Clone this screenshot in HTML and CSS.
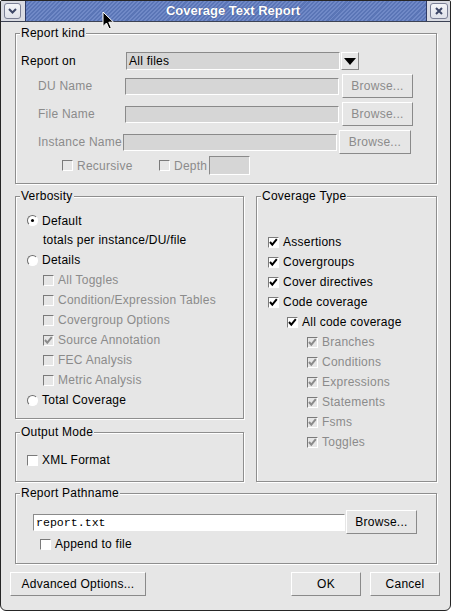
FILE: index.html
```html
<!DOCTYPE html>
<html>
<head>
<meta charset="utf-8">
<link rel="stylesheet" href="styles.css">
</head>
<body>
<div class="window">
  <div class="titlebar">
    <div class="tb-btn tb-left"><svg width="9" height="6" viewBox="0 0 9 6"><polyline points="1,1 4.5,4.5 8,1" fill="none" stroke="#3d4767" stroke-width="2"/></svg></div>
    <div class="tb-title">Coverage Text Report</div>
    <div class="tb-btn tb-right"><svg width="8" height="8" viewBox="0 0 8 8"><path d="M1 1 L7 7 M7 1 L1 7" stroke="#3d4767" stroke-width="2"/></svg></div>
  </div>

  <div class="body">
    <div class="group kind">
      <div class="group-title">Report kind</div>
      <div class="gbody kind-body">
        <div class="row r-combo">
          <span class="lbl-main">Report on</span>
          <div class="combo">All files</div>
          <div class="combo-btn"><svg width="12" height="7" viewBox="0 0 12 7"><polygon points="0,0 12,0 6,7" fill="#000"/></svg></div>
        </div>
        <div class="row r-field">
          <span class="lbl-sub dis">DU Name</span>
          <div class="field"></div>
          <button class="btn browse dis">Browse...</button>
        </div>
        <div class="row r-field">
          <span class="lbl-sub dis">File Name</span>
          <div class="field"></div>
          <button class="btn browse dis">Browse...</button>
        </div>
        <div class="row r-field">
          <span class="lbl-sub lbl-inst dis">Instance Name</span>
          <div class="field"></div>
          <button class="btn browse browse-inst dis">Browse...</button>
        </div>
        <div class="row r-rec">
          <span class="opt opt-rec"><span class="cb cb-dis"></span><span class="dis">Recursive</span></span>
          <span class="opt opt-depth"><span class="cb cb-dis"></span><span class="dis">Depth</span></span>
          <div class="depth-field"></div>
        </div>
      </div>
    </div>

    <div class="middle">
      <div class="left-col">
        <div class="group verb">
          <div class="group-title">Verbosity</div>
          <div class="gbody verb-body">
            <div class="line first"><span class="rb rb-on"></span><span>Default</span></div>
            <div class="line ind">totals per instance/DU/file</div>
            <div class="line"><span class="rb"></span><span>Details</span></div>
            <div class="line ind"><span class="cb cb-dis"></span><span class="dis">All Toggles</span></div>
            <div class="line ind"><span class="cb cb-dis"></span><span class="dis">Condition/Expression Tables</span></div>
            <div class="line ind"><span class="cb cb-dis"></span><span class="dis">Covergroup Options</span></div>
            <div class="line ind"><span class="cb cb-dis"><svg width="9" height="9" viewBox="0 0 9 9"><polyline points="1,4 3.3,6.6 7.8,1.2" fill="none" stroke="#8b8b8b" stroke-width="2"/></svg></span><span class="dis">Source Annotation</span></div>
            <div class="line ind"><span class="cb cb-dis"></span><span class="dis">FEC Analysis</span></div>
            <div class="line ind"><span class="cb cb-dis"></span><span class="dis">Metric Analysis</span></div>
            <div class="line"><span class="rb"></span><span>Total Coverage</span></div>
          </div>
        </div>
        <div class="group outmode">
          <div class="group-title">Output Mode</div>
          <div class="gbody out-body">
            <div class="line"><span class="cb"></span><span>XML Format</span></div>
          </div>
        </div>
      </div>

      <div class="group cov">
        <div class="group-title">Coverage Type</div>
        <div class="gbody cov-body">
          <div class="line"><span class="cb"><svg width="9" height="9" viewBox="0 0 9 9"><polyline points="1,4 3.3,6.6 7.8,1.2" fill="none" stroke="#000" stroke-width="2"/></svg></span><span>Assertions</span></div>
          <div class="line"><span class="cb"><svg width="9" height="9" viewBox="0 0 9 9"><polyline points="1,4 3.3,6.6 7.8,1.2" fill="none" stroke="#000" stroke-width="2"/></svg></span><span>Covergroups</span></div>
          <div class="line"><span class="cb"><svg width="9" height="9" viewBox="0 0 9 9"><polyline points="1,4 3.3,6.6 7.8,1.2" fill="none" stroke="#000" stroke-width="2"/></svg></span><span>Cover directives</span></div>
          <div class="line"><span class="cb"><svg width="9" height="9" viewBox="0 0 9 9"><polyline points="1,4 3.3,6.6 7.8,1.2" fill="none" stroke="#000" stroke-width="2"/></svg></span><span>Code coverage</span></div>
          <div class="line ind1"><span class="cb"><svg width="9" height="9" viewBox="0 0 9 9"><polyline points="1,4 3.3,6.6 7.8,1.2" fill="none" stroke="#000" stroke-width="2"/></svg></span><span>All code coverage</span></div>
          <div class="line ind2"><span class="cb cb-dis"><svg width="9" height="9" viewBox="0 0 9 9"><polyline points="1,4 3.3,6.6 7.8,1.2" fill="none" stroke="#8b8b8b" stroke-width="2"/></svg></span><span class="dis">Branches</span></div>
          <div class="line ind2"><span class="cb cb-dis"><svg width="9" height="9" viewBox="0 0 9 9"><polyline points="1,4 3.3,6.6 7.8,1.2" fill="none" stroke="#8b8b8b" stroke-width="2"/></svg></span><span class="dis">Conditions</span></div>
          <div class="line ind2"><span class="cb cb-dis"><svg width="9" height="9" viewBox="0 0 9 9"><polyline points="1,4 3.3,6.6 7.8,1.2" fill="none" stroke="#8b8b8b" stroke-width="2"/></svg></span><span class="dis">Expressions</span></div>
          <div class="line ind2"><span class="cb cb-dis"><svg width="9" height="9" viewBox="0 0 9 9"><polyline points="1,4 3.3,6.6 7.8,1.2" fill="none" stroke="#8b8b8b" stroke-width="2"/></svg></span><span class="dis">Statements</span></div>
          <div class="line ind2"><span class="cb cb-dis"><svg width="9" height="9" viewBox="0 0 9 9"><polyline points="1,4 3.3,6.6 7.8,1.2" fill="none" stroke="#8b8b8b" stroke-width="2"/></svg></span><span class="dis">Fsms</span></div>
          <div class="line ind2"><span class="cb cb-dis"><svg width="9" height="9" viewBox="0 0 9 9"><polyline points="1,4 3.3,6.6 7.8,1.2" fill="none" stroke="#8b8b8b" stroke-width="2"/></svg></span><span class="dis">Toggles</span></div>
        </div>
      </div>
    </div>

    <div class="group path">
      <div class="group-title">Report Pathname</div>
      <div class="gbody path-body">
        <div class="row r-entry">
          <div class="entry">report.txt</div>
          <button class="btn browse browse-path">Browse...</button>
        </div>
        <div class="line append"><span class="cb"></span><span>Append to file</span></div>
      </div>
    </div>
  </div>

  <div class="actions">
    <button class="btn btn-adv">Advanced Options...</button>
    <div class="spacer"></div>
    <button class="btn btn-ok">OK</button>
    <button class="btn btn-cancel">Cancel</button>
  </div>

  <svg class="cursor" width="13" height="20" viewBox="0 0 13 20"><path d="M1 1 V15.5 L4.5 12 L7 17.8 L9.3 16.8 L6.8 11.2 H11.5 Z" fill="#000" stroke="#fff" stroke-width="1" stroke-linejoin="miter"/></svg>
</div>
</body>
</html>
```

FILE: styles.css
```css
* { box-sizing: border-box; }
html, body { margin: 0; padding: 0; background: #ffffff; }
body {
  width: 451px;
  height: 611px;
  font-family: "Liberation Sans", Arial, sans-serif;
  font-size: 12px;
  line-height: 14px;
  letter-spacing: 0.25px;
  color: #000;
}

.window {
  position: relative;
  width: 451px;
  height: 611px;
  border: 1px solid #262626;
  border-radius: 2px 2px 6px 6px;
  background: #e6e6e6;
  overflow: hidden;
}

/* title bar */
.titlebar {
  height: 21px;
  display: flex;
  align-items: stretch;
  background: #d9dbe2;
  border-bottom: 1px solid #3c4254;
}
.tb-btn {
  flex: none;
  align-self: center;
  height: 16px;
  border: 1px solid #7b8096;
  border-radius: 3px;
  background: linear-gradient(#f4f5f8, #dfe2ea);
  display: flex;
  align-items: center;
  justify-content: center;
}
.tb-left { width: 17px; margin: 0 4px 0 3px; }
.tb-right { width: 18px; margin: 0 2px 0 3px; }
.tb-title {
  flex: 1;
  display: flex;
  align-items: center;
  justify-content: center;
  padding-left: 14px;
  border-left: 1px solid #2f3b66;
  border-right: 1px solid #2f3b66;
  background:
    repeating-linear-gradient(135deg, #5a75b6 0 1.5px, #7089c7 1.5px 2.9px);
  color: #ffffff;
  font-weight: bold;
  font-size: 13px;
  letter-spacing: 0;
  text-shadow: 0 0 1px rgba(20, 30, 70, 0.6);
}

/* body */
.body {
  padding: 11px 13px 0 14px;
}
.group {
  border: 1px solid #8e8e8e;
  box-shadow: 1px 1px 0 #ffffff, inset 1px 1px 0 #ffffff;
}
.group-title {
  display: table;
  margin: -8px 0 0 4px;
  padding: 0 1px;
  line-height: 14px;
  background: #e6e6e6;
}

.dis { color: #8b8b8b; }

.row { display: flex; align-items: center; }
.line { display: flex; align-items: center; height: 20px; white-space: nowrap; }

/* report kind */
.kind { height: 151px; }
.kind-body { padding: 12px 0 0 5px; }
.r-combo { height: 18px; margin-bottom: 4px; }
.r-field { height: 24px; margin-bottom: 4px; }
.r-rec { height: 19px; margin-top: -2px; }
.lbl-main { width: 105px; flex: none; }
.lbl-sub { width: 87px; margin-left: 17px; flex: none; }
.lbl-inst { width: 85px; }

.combo, .field, .depth-field, .entry {
  border: 1px solid;
  border-color: #8a8a8a #ffffff #ffffff #8a8a8a;
  background: #d6d6d6;
  flex: none;
}
.combo {
  width: 214px;
  height: 18px;
  padding-left: 2px;
  line-height: 16px;
}
.combo-btn {
  width: 18px;
  height: 18px;
  margin-left: 1px;
  border: 1px solid;
  border-color: #ffffff #8a8a8a #8a8a8a #ffffff;
  display: flex;
  align-items: center;
  justify-content: center;
  flex: none;
}
.field { width: 214px; height: 17px; }
.depth-field { width: 41px; height: 19px; margin-left: 4px; }

.btn {
  height: 24px;
  margin: 0;
  padding: 0;
  border: 1px solid;
  border-color: #ffffff #8a8a8a #8a8a8a #ffffff;
  background: #e6e6e6;
  font-family: inherit;
  font-size: 12px;
  letter-spacing: 0.25px;
  color: #000;
  display: flex;
  align-items: center;
  justify-content: center;
  flex: none;
}
.btn.dis { color: #8b8b8b; }
.browse { width: 71px; margin-left: 3px; }
.browse-inst { width: 72px; margin-left: 2px; }

.opt { display: flex; align-items: center; flex: none; }
.opt-rec { width: 97px; margin-left: 41px; }
.opt-depth { width: 46px; }

/* checkboxes & radios */
.cb {
  width: 11px;
  height: 11px;
  margin-right: 4px;
  border: 1px solid;
  border-color: #7a7a7a #ffffff #ffffff #7a7a7a;
  background: #ffffff;
  display: inline-flex;
  align-items: center;
  justify-content: center;
  flex: none;
}
.cb-dis { background: #e6e6e6; }
.cb svg { display: block; }

.rb {
  position: relative;
  width: 11px;
  height: 11px;
  margin-right: 4px;
  border-radius: 50%;
  border: 1px solid;
  border-color: #6c6c6c #ffffff #ffffff #6c6c6c;
  background: #ffffff;
  flex: none;
}
.rb-on::after {
  content: "";
  position: absolute;
  left: 3px;
  top: 3px;
  width: 3px;
  height: 3px;
  border-radius: 50%;
  background: #000;
}

/* middle */
.middle {
  margin-top: 12px;
  display: grid;
  grid-template-columns: 229px 181px;
  column-gap: 12px;
}
.left-col { display: flex; flex-direction: column; }
.verb { height: 223px; }
.verb-body { padding: 8px 0 0 11px; }
.verb-body .first { height: 19px; }
.verb-body .ind { padding-left: 16px; }
.outmode { height: 50px; margin-top: 13px; }
.out-body { padding: 11px 0 0 11px; }

.cov { height: 286px; }
.cov-body { padding: 29px 0 0 11px; }
.cov-body .ind1 { padding-left: 19px; }
.cov-body .ind2 { padding-left: 39px; }

/* path */
.path { height: 71px; margin-top: 11px; }
.path-body { padding: 10px 0 0 17px; }
.r-entry { height: 24px; }
.entry {
  width: 312px;
  height: 17px;
  background: #ffffff;
  padding-left: 2px;
  font-family: "Liberation Mono", "Courier New", monospace;
  font-size: 11.6px;
  letter-spacing: 0;
  line-height: 15px;
}
.browse-path { margin-left: 1px; width: 71px; }
.append { padding-left: 7px; }

/* actions */
.actions {
  display: flex;
  margin-top: 8px;
  padding: 0 10px 0 9px;
}
.spacer { flex: 1; }
.btn-adv { width: 136px; }
.btn-ok { width: 70px; margin-right: 9px; }
.btn-cancel { width: 70px; }

.cursor {
  position: absolute;
  left: 101px;
  top: 10px;
}
```
